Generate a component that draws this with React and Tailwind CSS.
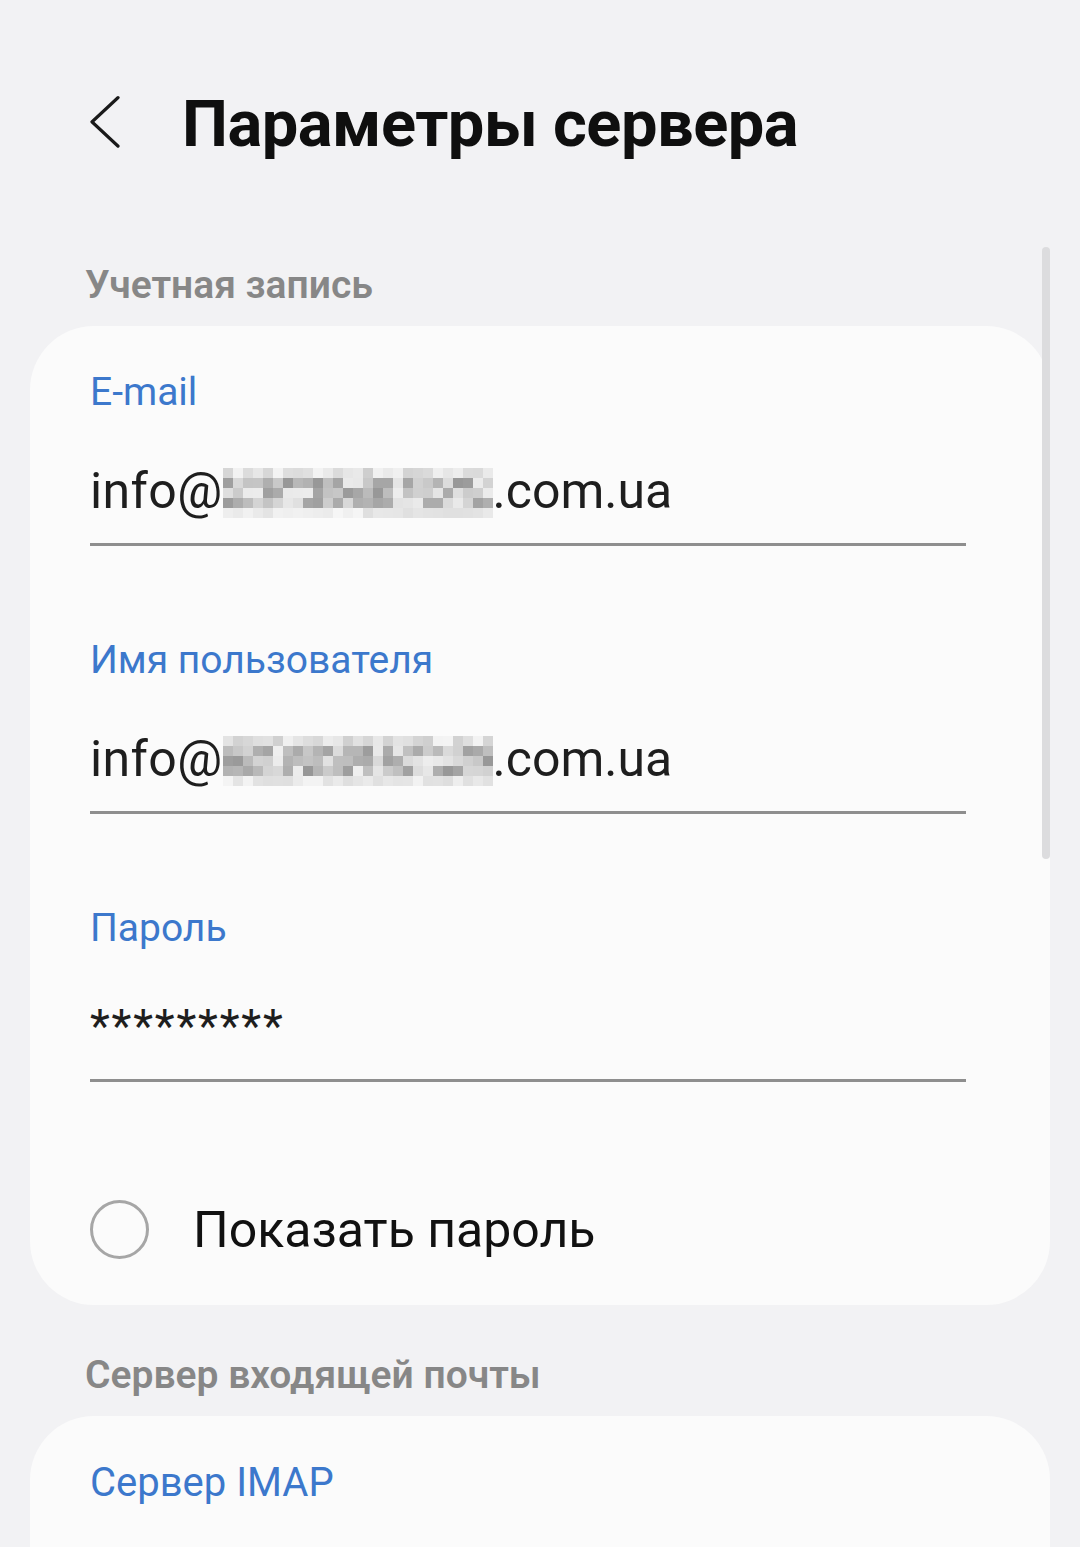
import React from "react";

const FONT = { fontFamily: "Roboto, 'Noto Sans', 'Liberation Sans', sans-serif" };

// Pixelated mosaic used for the masked part of the address
function Mosaic({ seed = 1 }) {
  const cols = 27;
  const rows = 5;
  const cells = [];
  let s = seed * 9301 + 49297;
  for (let r = 0; r < rows; r++) {
    for (let c = 0; c < cols; c++) {
      s = (s * 9301 + 49297) % 233280;
      const rnd = s / 233280;
      let base;
      if (r === 0) base = 205 + rnd * 40;
      else if (r === 4) base = 222 + rnd * 25;
      else base = 150 + rnd * 90;
      const v = Math.round(base);
      cells.push(
        <rect key={`${r}-${c}`} x={c * 10} y={r * 10} width="10" height="10" fill={`rgb(${v},${v},${v})`} />
      );
    }
  }
  return (
    <svg width="270" height="50" viewBox="0 0 270 50" className="block">
      {cells}
    </svg>
  );
}

function MaskedEmail({ seed }) {
  return (
    <div className="flex items-center text-[50px] leading-none text-[#1e1e1e]">
      <span className="tracking-[0.4px]">info@</span>
      <span className="mt-[4px]">
        <Mosaic seed={seed} />
      </span>
      <span>.com.ua</span>
    </div>
  );
}

function Field({ label, children }) {
  return (
    <div className="flex flex-col">
      <div className="text-[39px] leading-[40px] text-[#3c78cc] h-[40px]">{label}</div>
      <div className="h-[50px] mt-[54px] mb-[27px] flex items-center">{children}</div>
      <div className="h-[3px] w-[876px] bg-[#8e8e8e]" />
    </div>
  );
}

export default function App() {
  return (
    <div className="relative w-[1080px] h-[1547px] overflow-hidden bg-[#f2f2f4]" style={FONT}>
      {/* scroll indicator */}
      <div className="absolute left-[1042px] top-[247px] w-[8px] h-[612px] rounded-full bg-[#dcdcde]" />

      {/* header */}
      <div className="flex items-center h-[124px] mt-[62px] pl-[88px]">
        <svg width="36" height="58" viewBox="0 0 36 58" fill="none" className="block">
          <path d="M30 4 L4 30 L30 56" stroke="#1a1a1a" strokeWidth="3.4" strokeLinecap="round" strokeLinejoin="round" transform="translate(0,-1) scale(1,0.93)" />
        </svg>
        <h1 className="ml-[58px] text-[65px] font-bold leading-none text-[#0f0f0f] tracking-[-0.5px]">Параметры сервера</h1>
      </div>

      {/* account section */}
      <div className="mt-[80px] pl-[85px] text-[39px] font-semibold text-[#878787] leading-none">Учетная запись</div>

      <div className="mt-[21px] mx-[30px] rounded-[64px] bg-[#fbfbfb] pl-[60px] pt-[46px] pb-[46px]">
        <div className="flex flex-col gap-[94px]">
          <Field label="E-mail">
            <MaskedEmail seed={3} />
          </Field>
          <Field label="Имя пользователя">
            <MaskedEmail seed={7} />
          </Field>
          <Field label="Пароль">
            <div className="text-[46px] leading-none text-[#1e1e1e] tracking-[1.8px] -mt-[2px]">*********</div>
          </Field>
        </div>

        <div className="flex items-center mt-[118px]">
          <div className="w-[59px] h-[59px] rounded-full border-[3px] border-[#a6a6a6]" />
          <div className="ml-[44px] text-[50px] leading-none text-[#111111]">Показать пароль</div>
        </div>
      </div>

      {/* incoming server section */}
      <div className="mt-[51px] pl-[85px] text-[39px] font-semibold text-[#878787] leading-none">Сервер входящей почты</div>

      <div className="mt-[21px] mx-[30px] h-[400px] rounded-[64px] bg-[#fbfbfb] pl-[60px] pt-[47px]">
        <div className="text-[40px] leading-none text-[#3c78cc]">Сервер IMAP</div>
      </div>
    </div>
  );
}
